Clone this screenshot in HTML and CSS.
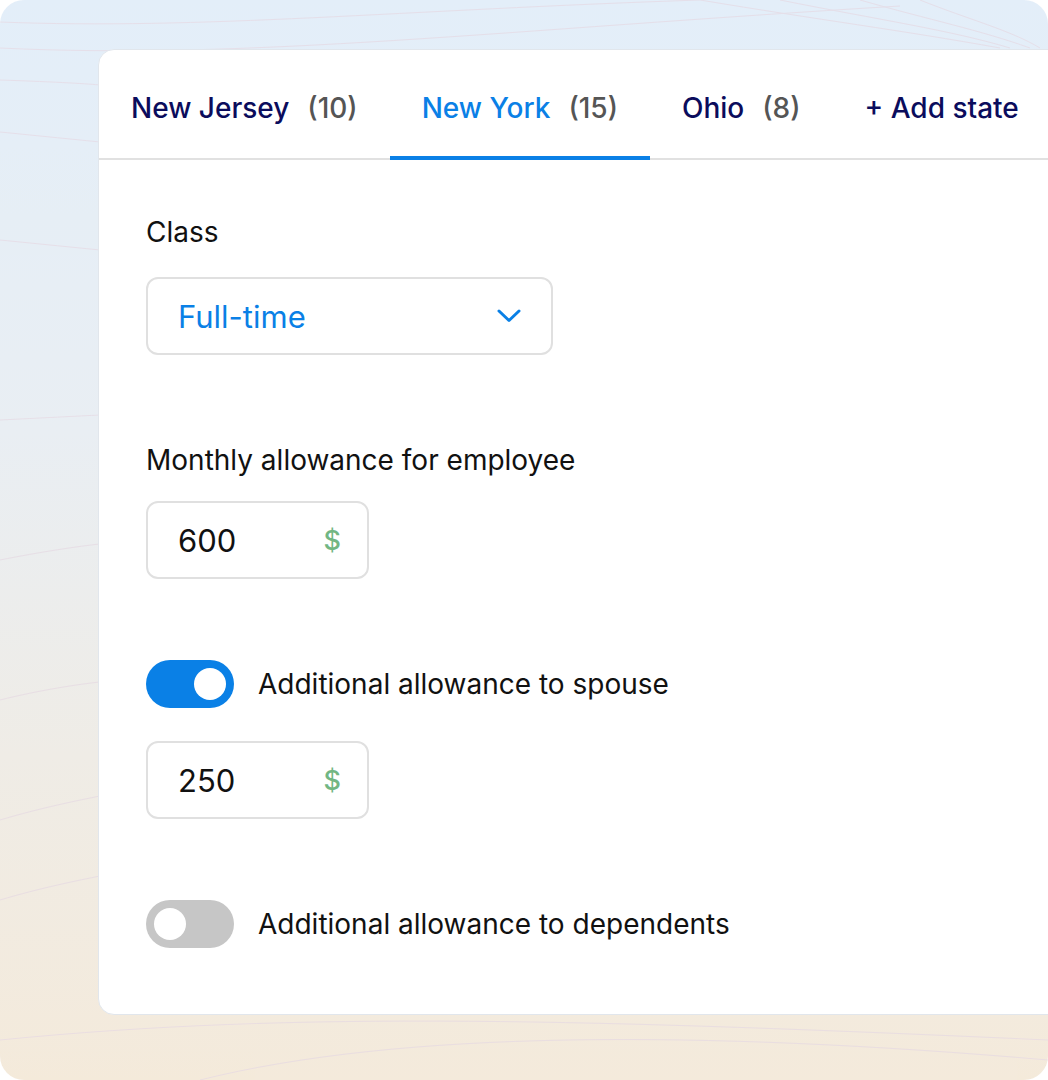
FILE: index.html
```html
<!DOCTYPE html>
<html lang="en">
<head>
<meta charset="utf-8">
<title>State allowances</title>
<link rel="stylesheet" href="styles.css">
</head>
<body>
<div class="frame">
  <svg class="waves" width="1048" height="1080" viewBox="0 0 1048 1080" aria-hidden="true">
    <g fill="none" stroke="#e6d9e3" stroke-width="1" opacity="0.7">
      <path d="M0 22 C 200 30, 400 10, 700 0"/>
      <path d="M0 48 C 250 60, 500 30, 900 6"/>
      <path d="M0 80 C 60 82, 90 84, 100 85"/>
      <path d="M0 132 C 40 136, 80 140, 100 142"/>
      <path d="M0 240 C 40 244, 80 248, 100 250"/>
      <path d="M0 420 C 40 418, 80 416, 100 415"/>
      <path d="M0 560 C 40 552, 80 546, 100 544"/>
      <path d="M0 700 C 40 690, 80 684, 100 682"/>
      <path d="M0 820 C 40 808, 80 800, 100 796"/>
      <path d="M0 900 C 40 888, 80 880, 100 876"/>
      <path d="M0 1040 C 300 1010, 600 1020, 1048 1040"/>
      <path d="M200 1080 C 400 1030, 700 1030, 1048 1060"/>
      <path d="M700 0 C 820 20, 900 30, 1000 48"/>
      <path d="M780 0 C 880 20, 950 30, 1010 48"/>
      <path d="M860 0 C 930 20, 980 30, 1030 48"/>
      <path d="M920 0 C 970 20, 1010 30, 1040 48"/>
    </g>
  </svg>
  <div class="card">
    <nav class="tabs">
      <div class="tab"><span class="tab-name">New Jersey</span><span class="tab-count">(10)</span></div>
      <div class="tab active"><span class="tab-name">New York</span><span class="tab-count">(15)</span></div>
      <div class="tab"><span class="tab-name">Ohio</span><span class="tab-count">(8)</span></div>
      <div class="tab"><span class="tab-name">+ Add state</span></div>
    </nav>
    <div class="content">
      <div class="label label-class">Class</div>
      <div class="select">
        <span class="select-value">Full-time</span>
        <svg class="chevron" width="24" height="14" viewBox="0 0 24 14" aria-hidden="true">
          <polyline points="2,2 12,11.5 22,2" fill="none" stroke="#0a80e6" stroke-width="3" stroke-linecap="round" stroke-linejoin="round"/>
        </svg>
      </div>
      <div class="label label-monthly">Monthly allowance for employee</div>
      <div class="money"><span class="money-value">600</span><span class="currency">$</span></div>
      <div class="toggle-row toggle-row-spouse">
        <span class="toggle on"><span class="knob"></span></span>
        <span class="toggle-label">Additional allowance to spouse</span>
      </div>
      <div class="money money-spouse"><span class="money-value">250</span><span class="currency">$</span></div>
      <div class="toggle-row toggle-row-dependents">
        <span class="toggle off"><span class="knob"></span></span>
        <span class="toggle-label">Additional allowance to dependents</span>
      </div>
    </div>
  </div>
</div>
</body>
</html>
```

FILE: styles.css
```css
* { box-sizing: border-box; }

html, body {
  margin: 0;
  padding: 0;
  background: #ffffff;
}

body {
  font-family: Inter, "Noto Sans", "Liberation Sans", sans-serif;
  color: #111111;
}

.frame {
  position: relative;
  width: 1048px;
  height: 1080px;
  overflow: hidden;
  border-radius: 24px;
  background: linear-gradient(180deg, #e3eef9 0%, #e9eef3 40%, #efece6 70%, #f4eadb 100%);
  padding-top: 49px;
  padding-left: 98px;
}

.waves {
  position: absolute;
  left: 0;
  top: 0;
}

.card {
  position: relative;
  width: 1000px;
  height: 966px;
  background: #ffffff;
  border: 1px solid #e1e6ec;
  border-radius: 16px;
}

.tabs {
  display: flex;
  height: 110px;
  border-bottom: 2px solid #e1e1e1;
}

.tab {
  display: flex;
  align-items: center;
  gap: 18px;
  height: 110px;
  padding: 10px 32px 0 32px;
  margin-bottom: -2px;
  border-bottom: 4px solid transparent;
  font-size: 28px;
  line-height: 34px;
  white-space: nowrap;
}

.tab-name {
  color: #0b0c5c;
  font-weight: 500;
}

.tab-count {
  color: #555555;
  font-weight: 500;
}

.tab.active {
  border-bottom-color: #0a80e6;
}

.tab.active .tab-name {
  color: #0a80e6;
}

.content {
  display: flex;
  flex-direction: column;
  align-items: flex-start;
  padding: 56px 0 0 47px;
}

.label {
  font-size: 28px;
  line-height: 32px;
  color: #111111;
}

.label-class {
  margin-bottom: 29px;
}

.label-monthly {
  margin-top: 89px;
  margin-bottom: 25px;
}

.select {
  display: flex;
  align-items: center;
  justify-content: space-between;
  width: 407px;
  height: 78px;
  padding: 0 30px 0 30px;
  border: 2px solid #e0e0e0;
  border-radius: 12px;
}

.select-value {
  font-size: 31px;
  color: #0a80e6;
}

.chevron {
  display: block;
}

.money {
  display: flex;
  align-items: center;
  justify-content: space-between;
  width: 223px;
  height: 78px;
  padding: 0 26px 0 30px;
  border: 2px solid #e0e0e0;
  border-radius: 12px;
}

.money-value {
  font-size: 31px;
  color: #111111;
}

.currency {
  font-size: 27px;
  font-weight: 500;
  color: #72b683;
}

.toggle-row {
  display: flex;
  align-items: center;
  gap: 24px;
  margin-top: 81px;
}

.toggle-row-spouse {
  margin-bottom: 33px;
}

.toggle {
  display: flex;
  align-items: center;
  width: 88px;
  height: 48px;
  padding: 0 8px;
  border-radius: 24px;
}

.toggle.on {
  background: #0a80e6;
  justify-content: flex-end;
}

.toggle.off {
  background: #c6c6c6;
  justify-content: flex-start;
}

.knob {
  width: 32px;
  height: 32px;
  border-radius: 50%;
  background: #ffffff;
}

.toggle-label {
  font-size: 28px;
  line-height: 32px;
  color: #111111;
}
```
